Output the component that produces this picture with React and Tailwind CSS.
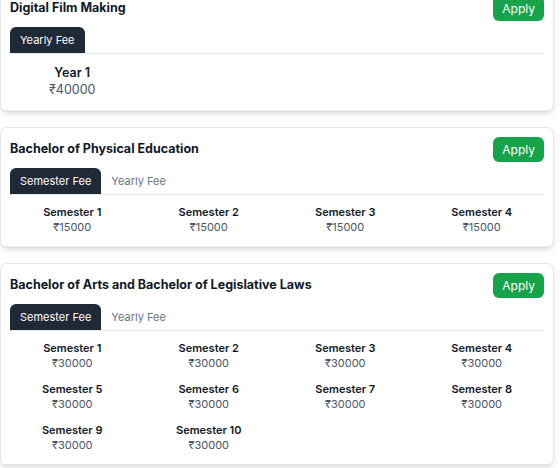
import React from 'react';

const courses = [
  {
    title: 'Digital Film Making',
    tabs: ['Yearly Fee'],
    big: true,
    fees: [{ label: 'Year 1', amount: 40000 }],
  },
  {
    title: 'Bachelor of Physical Education',
    tabs: ['Semester Fee', 'Yearly Fee'],
    fees: [1, 2, 3, 4].map((n) => ({ label: `Semester ${n}`, amount: 15000 })),
  },
  {
    title: 'Bachelor of Arts and Bachelor of Legislative Laws',
    tabs: ['Semester Fee', 'Yearly Fee'],
    fees: [1, 2, 3, 4, 5, 6, 7, 8, 9, 10].map((n) => ({ label: `Semester ${n}`, amount: 30000 })),
  },
];

const CourseCard = ({ course }) => (
  <div className="rounded-md border border-gray-200 bg-white px-[9px] pt-[9px] shadow-md">
    <div className="flex items-center justify-between">
      <h2 className="text-[12.5px] font-bold text-gray-900">{course.title}</h2>
      <button
        type="button"
        className="h-[25px] rounded-md bg-[#16a34a] px-[9px] text-[12px] text-white"
      >
        Apply
      </button>
    </div>

    <div className="mt-[6px] flex border-b border-gray-200">
      {course.tabs.map((tab, idx) => (
        <button
          key={tab}
          type="button"
          className={`h-[26px] rounded-t-md px-[10px] text-[11px] ${idx === 0 ? 'bg-[#1f2937] text-white' : 'text-gray-500'}`}
        >
          {tab}
        </button>
      ))}
    </div>

    <div className={`grid grid-cols-4 gap-x-3 gap-y-[11px] pt-[10px] ${course.big ? 'pb-[12px]' : 'pb-[11px]'}`}>
      {course.fees.map((fee) => (
        <div key={fee.label} className="flex flex-col items-center">
          <span className={`font-semibold text-gray-900 ${course.big ? 'text-[12.5px] leading-[17px]' : 'text-[11px] leading-[15px]'}`}>
            {fee.label}
          </span>
          <span className={`text-gray-600 ${course.big ? 'text-[12.5px] leading-[17px]' : 'text-[11px] leading-[15px]'}`}>
            ₹{fee.amount}
          </span>
        </div>
      ))}
    </div>
  </div>
);

export default function App() {
  return (
    <div className="h-[468px] w-[560px] overflow-hidden bg-white" style={{ fontFamily: 'Inter, "Noto Sans", sans-serif' }}>
      <div className="-mt-[14px] flex w-[554px] flex-col gap-4">
        {courses.map((course) => (
          <CourseCard key={course.title} course={course} />
        ))}
      </div>
    </div>
  );
}
